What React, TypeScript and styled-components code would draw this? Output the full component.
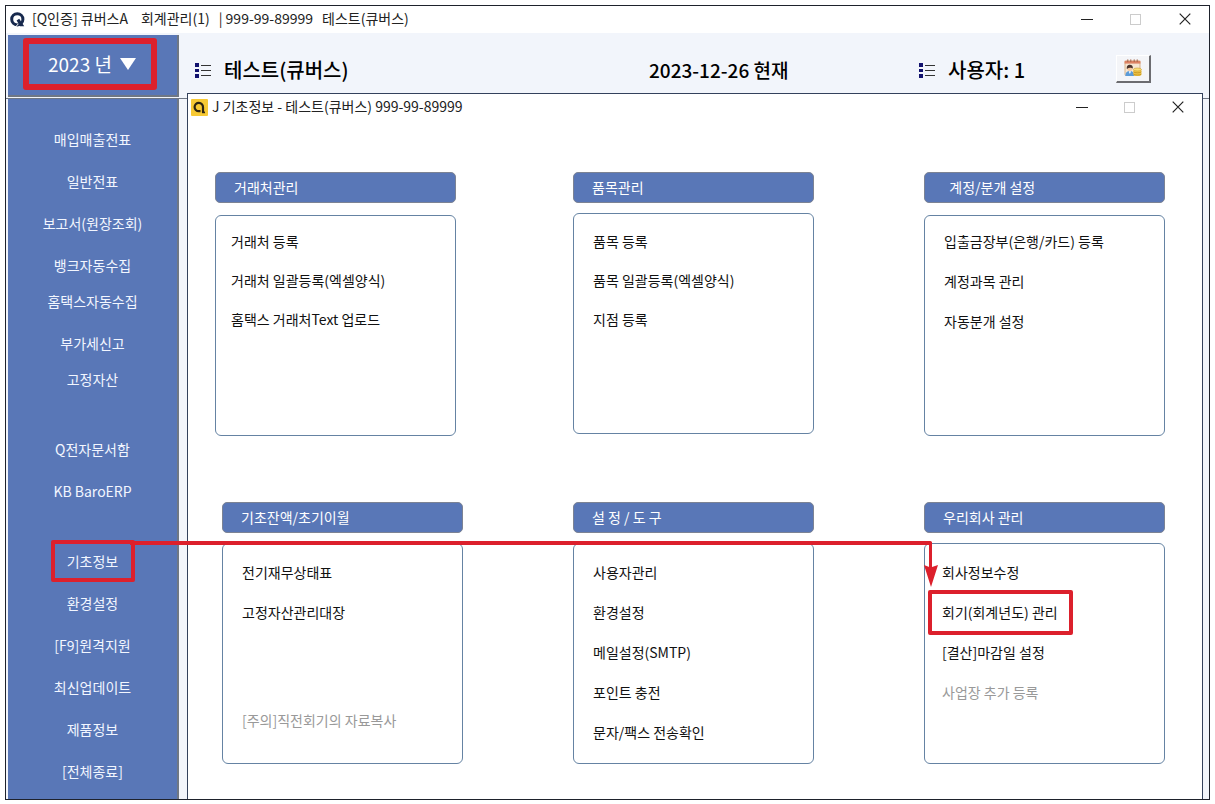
import React from "react";
import styled, { createGlobalStyle, css } from "styled-components";

const blue = "#5977b7";
const red = "#dc202c";
const ink = "#1e222c";

const GlobalStyle = createGlobalStyle`
  * { box-sizing: border-box; }
  body {
    margin: 0;
    background: #fff;
    color: #111;
    font-family: "Noto Sans CJK KR", "Noto Sans", sans-serif;
    font-size: 14px;
    line-height: 20px;
  }
  button {
    font: inherit;
    color: inherit;
    background: none;
    border: 0;
    padding: 0;
    cursor: pointer;
  }
  ul { list-style: none; margin: 0; padding: 0; }
  h1, h2, p { margin: 0; font: inherit; }
  svg { display: block; flex: none; }
`;

const Page = styled.div`
  display: flex;
  min-height: 100vh;
  padding: 5px 5px 4px;
`;

const MainWindow = styled.div`
  flex: 1;
  display: flex;
  flex-direction: column;
  border: 1px solid ${ink};
`;

const TitleBar = styled.header<{ $child?: boolean }>`
  display: flex;
  align-items: center;
  height: 27px;
  padding-left: ${(p) => (p.$child ? 3 : 4)}px;
  gap: ${(p) => (p.$child ? 4 : 7)}px;
  background: #fff;
  white-space: pre;
`;

const TitleText = styled.h1`
  flex: 1;
  display: flex;
  padding-bottom: 4px;
  color: #222;
`;

const Segment = styled.span`
  margin-right: 13px;
`;

const TightSegment = styled.span`
  margin-right: 9px;
`;

const WindowControl = styled.button<{ $child?: boolean }>`
  display: grid;
  place-items: center;
  width: ${(p) => (p.$child ? 48 : 49)}px;
  height: 25px;
`;

const Controls = styled.div`
  display: flex;
  padding-bottom: 2px;
`;

const Columns = styled.div`
  flex: 1;
  display: flex;
  background: #f2f5fb;
`;

const SideColumn = styled.div`
  flex: none;
  width: 175px;
  display: flex;
  flex-direction: column;
`;

const YearPanel = styled.div`
  height: 62px;
  margin: 2px 2px 1px;
  padding: 3px 0 0 15px;
  background: ${blue};
  border: solid #6f7784;
  border-width: 0 2px 2px 0;
`;

const YearButton = styled.button`
  display: flex;
  align-items: center;
  justify-content: center;
  gap: 8px;
  width: 134px;
  height: 52px;
  padding-left: 4px;
  border: 6px solid ${red};
  border-radius: 3px;
  color: #fff;
  font-size: 19px;
`;

const Sidebar = styled.nav`
  flex: 1;
  padding-left: 2px;
  border-top: 1px solid #6f7784;
`;

const NavList = styled.ul`
  height: 100%;
  margin-right: 2px;
  padding: 19px 0 6px;
  background: ${blue};
  border-right: 2px solid #6f7784;
`;

const NavRow = styled.li<{ $height: number }>`
  display: flex;
  align-items: flex-end;
  justify-content: center;
  height: ${(p) => p.$height}px;
`;

const NavButton = styled.button<{ $marked?: boolean }>`
  width: 84px;
  height: 42px;
  white-space: nowrap;
  display: grid;
  place-content: center;
  color: #f2f6ff;
  ${(p) =>
    p.$marked &&
    css`
      border: 4px solid ${red};
      border-radius: 2px;
    `}
`;

const Workspace = styled.main`
  flex: 1;
  min-width: 0;
  display: flex;
  flex-direction: column;
`;

const StatusBar = styled.div`
  display: grid;
  grid-template-columns: 454fr 270fr 197fr 93fr;
  align-items: center;
  height: 60px;
  padding: 14px 0 0 14px;
  color: #000;
`;

const StatusItem = styled.p<{ $size: number }>`
  display: flex;
  align-items: center;
  gap: 13px;
  font-size: ${(p) => p.$size}px;
  font-weight: 500;
  white-space: nowrap;
`;

const ToolButton = styled.button`
  display: grid;
  place-items: center;
  width: 35px;
  height: 28px;
  margin-bottom: 3px;
  background: #f4f5f8;
  border: solid;
  border-width: 1px 2px 2px 1px;
  border-color: #fff #6c6c70 #6c6c70 #fff;
`;

const ChildRow = styled.div`
  flex: 1;
  display: flex;
`;

const Gutter = styled.div`
  flex: none;
  width: 6px;
  margin-top: 5px;
  border-top: 1px solid #6f7784;
`;

const ChildWindow = styled.section`
  flex: 1;
  min-width: 0;
  background: #fff;
  border: 1px solid #33415c;
  border-bottom: 0;
  padding-bottom: 35px;
`;

const CardRow = styled.div<{ $shifted?: boolean }>`
  position: relative;
  display: grid;
  grid-template-columns: ${(p) => (p.$shifted ? 351 : 358)}fr 351fr 278fr;
  padding-left: ${(p) => (p.$shifted ? 34 : 27)}px;
  margin-top: ${(p) => (p.$shifted ? 66 : 51)}px;
`;

const Card = styled.section<{ $gap: number }>`
  display: flex;
  flex-direction: column;
  gap: ${(p) => p.$gap}px;
  width: 241px;
`;

const CardTitle = styled.h2`
  height: 31px;
  padding: 0 18px;
  line-height: 29px;
  white-space: pre;
  color: #fff;
  background: ${blue};
  border: 1px solid #7c8394;
  border-radius: 5px;
`;

const CardBody = styled.ul<{ $top: number; $left: number; $pitch: number }>`
  display: flex;
  flex-direction: column;
  height: 221px;
  padding: ${(p) => p.$top}px 0 23px ${(p) => p.$left}px;
  border: 1px solid #6583a3;
  border-radius: 6px;

  li {
    flex: none;
    display: flex;
    align-items: center;
    height: ${(p) => p.$pitch}px;
  }
  li[data-last] { margin-top: auto; }
`;

const MenuButton = styled.button`
  position: relative;
  white-space: nowrap;
  color: #111;
  &:disabled { color: #999; cursor: default; }
`;

const MenuMark = styled.span`
  position: absolute;
  inset: -12px -15px -13px -14px;
  border: 4px solid ${red};
  border-radius: 2px;
  pointer-events: none;
`;

const Connector = styled.div`
  position: absolute;
  grid-column: 1 / 3;
  top: 38px;
  left: -92px;
  right: -14px;
  display: flex;
  align-items: flex-start;
  pointer-events: none;

  &::before {
    content: "";
    flex: 1;
    height: 4px;
    margin: 1px -8px 0 0;
    border-radius: 0 2px 0 0;
    background: ${red};
  }
`;

const MinimizeIcon = () => (
  <svg width="12" height="12" viewBox="0 0 12 12" aria-hidden="true">
    <path d="M0 6.5h12" stroke="#222" />
  </svg>
);

const MaximizeIcon = () => (
  <svg width="12" height="12" viewBox="0 0 12 12" aria-hidden="true">
    <rect x=".5" y="1.5" width="10" height="10" fill="none" stroke="#ccc" />
  </svg>
);

const CloseIcon = () => (
  <svg width="12" height="12" viewBox="0 0 12 12" aria-hidden="true">
    <path d="M.7.7l10.6 10.6M11.3.7L.7 11.3" stroke="#222" strokeWidth="1.2" />
  </svg>
);

const WindowControls = ({ child }: { child?: boolean }) => (
  <Controls>
    <WindowControl $child={child} aria-label="최소화"><MinimizeIcon /></WindowControl>
    <WindowControl $child={child} aria-label="최대화"><MaximizeIcon /></WindowControl>
    <WindowControl $child={child} aria-label="닫기"><CloseIcon /></WindowControl>
  </Controls>
);

const QLogo = () => (
  <svg width="15" height="16" viewBox="0 0 15 16" aria-hidden="true">
    <circle cx="7.3" cy="7.3" r="5.6" fill="none" stroke="#17294d" strokeWidth="3" />
    <path d="M6.6 8.4l2.6-1.6 5 7.4h-4.2z" fill="#17294d" />
    <path d="M5.2 15.4l3.2-3.6" stroke="#fff" strokeWidth="1" />
  </svg>
);

const ALogo = () => (
  <svg width="17" height="17" viewBox="0 0 17 17" aria-hidden="true">
    <rect width="17" height="17" rx="1" fill="#f7c934" />
    <path d="M12 13.500V8.200A4.200 4.200 0 1 0 7.800 12.200H9.500" fill="none" stroke="#2c2413" strokeWidth="2.200" />
    <path d="M11 12.600h3v1.600h-3z" fill="#2c2413" />
  </svg>
);

const ListIcon = () => (
  <svg width="16" height="15" viewBox="0 0 16 15" aria-hidden="true">
    <path d="M0 0h4v4H0zM0 6h4v3H0zM0 11h4v4H0z" fill="#12126e" />
    <path d="M6 2.5h10M6 7.5h10M6 12.5h10" stroke="#333" />
  </svg>
);

const CalendarIcon = () => (
  <svg width="18" height="18" viewBox="0 0 18 18" aria-hidden="true">
    <rect x="1" y="2" width="15" height="14.5" rx="1" fill="#f6e6d2" stroke="#d9b48c" />
    <path d="M.6 1.8h15.800v2.800H.6z" fill="#dc8263" />
    <path d="M3.800.4v2.600M6.800.4v2.600M10.200.4v2.600M13.200.4v2.600" stroke="#a0644a" />
    <path d="M1.400 17c0-3.600 1.600-5 4.400-5s4.400 1.400 4.400 5z" fill="#5b9bd8" />
    <path d="M4.600 12.200L5.900 15l1.200-2.800z" fill="#fff" />
    <circle cx="5.800" cy="9.600" r="2.500" fill="#f6c9a0" />
    <path d="M2.900 10C2.300 7 4 5.800 5.900 5.800s3.400 1.200 2.900 4C7.800 8.600 5 8.200 2.900 10z" fill="#4b352c" />
    <path d="M9.400 10.500v5c0 1 1.700 1.600 4 1.600s4-.6 4-1.600v-5z" fill="#efc544" />
    <path d="M9.400 12.800c1 1.400 7 1.400 8 0M9.400 15c1 1.400 7 1.400 8 0" fill="none" stroke="#b58215" strokeWidth=".7" />
    <ellipse cx="13.400" cy="10.500" rx="4" ry="1.500" fill="#f9de74" stroke="#c8982a" strokeWidth=".6" />
  </svg>
);

const DownTriangle = () => (
  <svg width="16" height="12" viewBox="0 0 16 12" aria-hidden="true">
    <path d="M0 0h16L8 12z" fill="#fff" />
  </svg>
);

const ArrowDown = () => (
  <svg width="14" height="48" viewBox="0 0 14 48" aria-hidden="true">
    <path d="M6.500 3v26" stroke={red} strokeWidth="3" strokeLinecap="round" />
    <path d="M0 25l6.500 2.600L14 25 7 47z" fill={red} />
  </svg>
);

const navItems: { label: string; apart?: boolean; near?: boolean; marked?: boolean }[] = [
  { label: "매입매출전표" },
  { label: "일반전표" },
  { label: "보고서(원장조회)" },
  { label: "뱅크자동수집" },
  { label: "홈택스자동수집", near: true },
  { label: "부가세신고" },
  { label: "고정자산", near: true },
  { label: "Q전자문서함", apart: true },
  { label: "KB BaroERP" },
  { label: "기초정보", apart: true, marked: true },
  { label: "환경설정" },
  { label: "[F9]원격지원" },
  { label: "최신업데이트" },
  { label: "제품정보" },
  { label: "[전체종료]" },
];

type Item = { label: string; disabled?: boolean; last?: boolean; marked?: boolean };
type CardData = { title: string; items: Item[]; gap: number; top: number; left: number; pitch: number };

const upperCards: CardData[] = [
  {
    title: "거래처관리", gap: 12, top: 5, left: 15, pitch: 39,
    items: [{ label: "거래처 등록" }, { label: "거래처 일괄등록(엑셀양식)" }, { label: "홈택스 거래처Text 업로드" }],
  },
  {
    title: "품목관리", gap: 10, top: 7, left: 19, pitch: 39,
    items: [{ label: "품목 등록" }, { label: "품목 일괄등록(엑셀양식)" }, { label: "지점 등록" }],
  },
  {
    title: "  계정/분개 설정", gap: 12, top: 5, left: 19, pitch: 40,
    items: [{ label: "입출금장부(은행/카드) 등록" }, { label: "계정과목 관리" }, { label: "자동분개 설정" }],
  },
];

const lowerCards: CardData[] = [
  {
    title: "기초잔액/초기이월", gap: 10, top: 8, left: 19, pitch: 40,
    items: [
      { label: "전기재무상태표" },
      { label: "고정자산관리대장" },
      { label: "[주의]직전회기의 자료복사", disabled: true, last: true },
    ],
  },
  {
    title: "설 정 / 도 구", gap: 10, top: 8, left: 19, pitch: 40,
    items: [
      { label: "사용자관리" },
      { label: "환경설정" },
      { label: "메일설정(SMTP)" },
      { label: "포인트 충전" },
      { label: "문자/팩스 전송확인" },
    ],
  },
  {
    title: "우리회사 관리", gap: 10, top: 8, left: 17, pitch: 40,
    items: [
      { label: "회사정보수정" },
      { label: "회기(회계년도) 관리", marked: true },
      { label: "[결산]마감일 설정" },
      { label: "사업장 추가 등록", disabled: true },
    ],
  },
];

const MenuCard = ({ title, items, gap, top, left, pitch }: CardData) => (
  <Card $gap={gap}>
    <CardTitle>{title}</CardTitle>
    <CardBody $top={top} $left={left} $pitch={pitch}>
      {items.map((item) => (
        <li key={item.label} data-last={item.last || undefined}>
          <MenuButton disabled={item.disabled}>
            {item.label}
            {item.marked && <MenuMark />}
          </MenuButton>
        </li>
      ))}
    </CardBody>
  </Card>
);

export default function App() {
  return (
    <Page>
      <GlobalStyle />
      <MainWindow>
        <TitleBar>
          <QLogo />
          <TitleText>
            <Segment>[Q인증] 큐버스A</Segment>
            <TightSegment>회계관리(1)</TightSegment>
            <TightSegment>| 999-99-89999</TightSegment>
            <span>테스트(큐버스)</span>
          </TitleText>
          <WindowControls />
        </TitleBar>
        <Columns>
          <SideColumn>
            <YearPanel>
              <YearButton>
                2023 년 <DownTriangle />
              </YearButton>
            </YearPanel>
            <Sidebar>
              <NavList>
                {navItems.map(({ label, apart, near, marked }) => (
                  <NavRow key={label} $height={apart ? 70 : near ? 36 : 42}>
                    <NavButton $marked={marked}>{label}</NavButton>
                  </NavRow>
                ))}
              </NavList>
            </Sidebar>
          </SideColumn>
          <Workspace>
            <StatusBar>
              <StatusItem $size={20}><ListIcon />테스트(큐버스)</StatusItem>
              <StatusItem $size={19}>2023-12-26 현재</StatusItem>
              <StatusItem $size={20}><ListIcon />사용자: 1</StatusItem>
              <ToolButton aria-label="일정"><CalendarIcon /></ToolButton>
            </StatusBar>
            <ChildRow>
              <Gutter />
              <ChildWindow>
                <TitleBar $child>
                  <ALogo />
                  <TitleText>J 기초정보 - 테스트(큐버스) 999-99-89999</TitleText>
                  <WindowControls child />
                </TitleBar>
                <CardRow>
                  {upperCards.map((card) => <MenuCard key={card.title} {...card} />)}
                </CardRow>
                <CardRow $shifted>
                  {lowerCards.map((card) => <MenuCard key={card.title} {...card} />)}
                  <Connector><ArrowDown /></Connector>
                </CardRow>
              </ChildWindow>
              <Gutter />
            </ChildRow>
          </Workspace>
        </Columns>
      </MainWindow>
    </Page>
  );
}
